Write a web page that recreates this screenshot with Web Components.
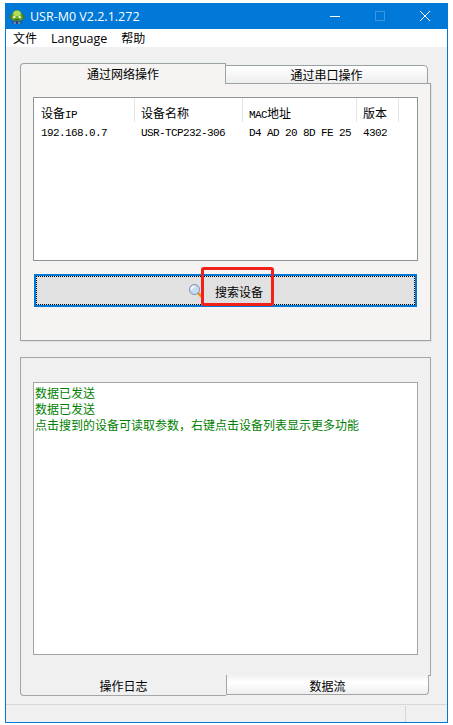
<!DOCTYPE html>
<html lang="zh">
<head>
<meta charset="utf-8">
<title>USR-M0</title>
<style>
  html, body { margin: 0; background: #fff; }
  body { font: 12px "Noto Sans CJK SC", sans-serif; color: #000; }
  .stack { display: block; }
</style>
</head>
<body>
<usr-window>
  <usr-titlebar slot="top">USR-M0 V2.2.1.272</usr-titlebar>
  <usr-menubar slot="top"></usr-menubar>

  <usr-tabs first="通过网络操作" second="通过串口操作">
    <div class="stack">
      <usr-listview></usr-listview>
      <usr-button>搜索设备</usr-button>
    </div>
  </usr-tabs>

  <usr-tabs bottom first="操作日志" second="数据流">
    <usr-log></usr-log>
  </usr-tabs>

  <usr-statusbar slot="bottom"></usr-statusbar>
</usr-window>

<script>
(function() {
  // titlebar with app icon and caption buttons
  class UsrTitlebar extends HTMLElement {
    constructor() {
      super();
      this.attachShadow({ mode: 'open' });
      this.shadowRoot.innerHTML = `
        <style>
          :host { display: flex; align-items: center; height: 26px; background: #0078d7; color: #fff;
            font: 12.5px "Open Sans", sans-serif; padding-left: 1px; }
          .logo { width: 20px; height: 20px; margin-right: 3px; flex: none; }
          .cap { flex: 1; padding-top: 1px; }
          .btns { display: flex; height: 26px; }
          .btn { width: 45px; display: flex; align-items: center; justify-content: center; }
          .btn svg { width: 12px; height: 12px; display: block; }
        </style>
        <svg class="logo" viewBox="0 0 20 20">
          <path d="M5.500 14.500h9V18h-9z" fill="#24477a"/>
          <path d="M6.500 15.500h2.500V18H6.500zM11 15.500h2.500V18H11z" fill="#5f86b8"/>
          <path d="M2.500 9.500l3-1.500v6l-3-1.500zM17.500 9.500l-3-1.500v6l3-1.500z" fill="#3f7a1c"/>
          <path d="M4.500 12c0-4.500 2.200-8 5.500-8s5.500 3.500 5.500 8c0 2-2.500 3-5.500 3s-5.500-1-5.500-3z" fill="#6aa626"/>
          <ellipse cx="10" cy="7.500" rx="3.600" ry="2.800" fill="#b5de58"/>
          <ellipse cx="7.300" cy="11" rx="1.300" ry="1.200" fill="#e6edd0"/>
          <ellipse cx="12.700" cy="11" rx="1.300" ry="1.200" fill="#e6edd0"/>
          <path d="M7.500 13.200h5v1.200h-5z" fill="#2f5a1a"/>
        </svg>
        <span class="cap"><slot></slot></span>
        <div class="btns">
          <div class="btn"><svg viewBox="0 0 12 12"><path d="M1 6.500h10" stroke="#fff" fill="none"/></svg></div>
          <div class="btn"><svg viewBox="0 0 12 12"><path d="M1.500 1.500h9v9h-9z" stroke="#3f97e0" fill="none"/></svg></div>
          <div class="btn"><svg viewBox="0 0 12 12"><path d="M1 1l10 10M11 1L1 11" stroke="#fff" fill="none"/></svg></div>
        </div>`;
    }
  }

  class UsrMenubar extends HTMLElement {
    constructor() {
      super();
      this.attachShadow({ mode: 'open' });
      this.shadowRoot.innerHTML = `
        <style>
          :host { display: flex; height: 18px; background: #fff;
            font: 12.500px "Open Sans", "Noto Sans CJK SC", sans-serif; padding-left: 7px; gap: 14px; }
          span { line-height: 20px; }
          .cn { font-size: 12px; }
        </style>
        <span class="cn">文件</span><span>Language</span><span class="cn">帮助</span>`;
    }
  }

  // panel with two tabs, on top or under it
  class UsrTabs extends HTMLElement {
    constructor() {
      super();
      this.attachShadow({ mode: 'open' });
      const first = this.getAttribute('first');
      const second = this.getAttribute('second');
      this.shadowRoot.innerHTML = `
        <style>
          :host { display: flex; flex-direction: column; width: 411px; height: 277px; flex: none; }
          :host([bottom]) { flex-direction: column-reverse; flex: 1; height: auto; min-height: 0; }
          .row { display: flex; align-items: flex-end; height: 20px; position: relative; z-index: 1; margin-bottom: -1px; }
          :host([bottom]) .row { align-items: flex-start; margin: -1px 0 0; height: 21px; }
          .tab { box-sizing: border-box; text-align: center; line-height: 20px; border: 1px solid #9aa3a3; }
          .a { width: 206px; height: 21px; background: #f5f4f2; border-bottom: 0; border-radius: 4px 0 0 0; }
          .b { width: 203px; height: 19px; margin-left: -1px; border-radius: 0 4px 0 0;
            background: linear-gradient(#fff, #eee); line-height: 17px; }
          :host([bottom]) .a { background: #f0f0f0; border: 1px solid #a5a5a5; border-top: 0;
            border-right: 0; height: 21px; border-radius: 0 0 0 4px; line-height: 21px; }
          :host([bottom]) .b { border: 1px solid #a5a5a5; border-top: 0; height: 20px;
            border-radius: 0 0 4px 0; margin-left: 0; line-height: 21px; background: linear-gradient(#f0f0f0, #fff 40%, #eee); }
          .body { flex: 1; display: flex; box-sizing: border-box; border: 1px solid #9aa3a3; background: #f5f4f2;
            box-shadow: 1px 1px 0 #e4e4e4; padding: 13px 12px 0; min-height: 0; }
          :host([bottom]) .body { background: #f0f0f0; border-color: #a5a5a5; box-shadow: none; padding: 24px 12px 20px; }
          ::slotted(*) { flex: 1; min-width: 0; }
        </style>
        <div class="row"><div class="tab a">${first}</div><div class="tab b">${second}</div></div>
        <div class="body"><slot></slot></div>`;
    }
  }

  class UsrListview extends HTMLElement {
    constructor() {
      super();
      this.attachShadow({ mode: 'open' });
      const cols = [
        [101, 7, '设备', 'IP', '192.168.0.7'],
        [108, 6, '设备名称', '', 'USR-TCP232-306'],
        [114, 6, '', 'MAC', 'D4 AD 20 8D FE 25', '地址'],
        [42, 6, '版本', '', '4302']
      ];
      const head = cols.map(c => `<div class="h" style="width:${c[0]}px;padding-left:${c[1]}px"><span>${c[2]}<b>${c[3]}</b>${c[5] || ''}</span></div>`).join('');
      const row = cols.map(c => `<div class="c" style="width:${c[0]}px;padding-left:${c[1]}px"><b>${c[4]}</b></div>`).join('');
      this.shadowRoot.innerHTML = `
        <style>
          :host { display: block; box-sizing: border-box; height: 164px; background: #fff; border: 1px solid #8e9494; }
          .line { display: flex; }
          .h { box-sizing: border-box; height: 24px; line-height: 29px; border-right: 1px solid #e5e5e5; white-space: nowrap; }
          .c { box-sizing: border-box; height: 16px; line-height: 18px; white-space: nowrap; }
          b { font: 11px "Liberation Mono", monospace; letter-spacing: -0.6px; }
        </style>
        <div class="line">${head}</div>
        <div class="line">${row}</div>`;
    }
  }

  class UsrButton extends HTMLElement {
    constructor() {
      super();
      this.attachShadow({ mode: 'open' });
      this.shadowRoot.innerHTML = `
        <style>
          :host { display: block; position: relative; box-sizing: border-box; height: 33px; width: 383px;
            margin: 13px 0 0 1px; background: #e1e1e1; border: 2px solid #0078d7; }
          .in { box-sizing: border-box; height: 100%; border: 1px dotted #000; display: flex;
            align-items: center; justify-content: center; gap: 11px; }
          .in span { padding-top: 2px; }
          svg { width: 16px; height: 16px; flex: none; margin-top: 0; }
          .mark { position: absolute; left: 165px; top: -9px; width: 73px; height: 39px; box-sizing: border-box;
            border: 3px solid #f2201a; border-radius: 3px; }
        </style>
        <div class="in">
          <svg viewBox="0 0 16 16">
            <path d="M10.500 10.500l3.500 3.500" stroke="#e8961e" stroke-width="2.500" stroke-linecap="round"/>
            <circle cx="6.500" cy="6.500" r="5" fill="#c6dcf0" stroke="#7f8fb8"/>
            <path d="M3.500 6.500a3 3 0 0 1 3-3" stroke="#fff" fill="none" stroke-width="1.500"/>
          </svg>
          <span><slot></slot></span>
        </div>
        <div class="mark"></div>`;
    }
  }

  class UsrLog extends HTMLElement {
    constructor() {
      super();
      this.attachShadow({ mode: 'open' });
      this.shadowRoot.innerHTML = `
        <style>
          :host { display: block; box-sizing: border-box; background: #fff; border: 1px solid #a5a5a5;
            color: #008000; padding: 2px 1px; line-height: 16px; }
          div { height: 16px; white-space: nowrap; }
        </style>
        <div>数据已发送</div>
        <div>数据已发送</div>
        <div>点击搜到的设备可读取参数，右键点击设备列表显示更多功能</div>`;
    }
  }

  class UsrStatusbar extends HTMLElement {
    constructor() {
      super();
      this.attachShadow({ mode: 'open' });
      this.shadowRoot.innerHTML = `
        <style>
          :host { display: flex; justify-content: flex-end; box-sizing: border-box; height: 18px;
            background: #f0f0f0; border-top: 1px solid #d7d7d7; padding-top: 1px; }
          div { width: 41px; border-left: 1px solid #d7d7d7; }
        </style>
        <div></div>`;
    }
  }

  class UsrWindow extends HTMLElement {
    constructor() {
      super();
      this.attachShadow({ mode: 'open' });
      this.shadowRoot.innerHTML = `
        <style>
          :host { display: flex; flex-direction: column; box-sizing: border-box; width: 443px; height: 720px;
            margin: 3px 0 0 5px; border: 1px solid #0078d7; border-top: 0; }
          .content { flex: 1; min-height: 0; display: flex; flex-direction: column; gap: 16px;
            background: #f0f0f0; padding: 17px 0 8px 14px; }
        </style>
        <slot name="top"></slot>
        <div class="content"><slot></slot></div>
        <slot name="bottom"></slot>`;
    }
  }

  customElements.define('usr-titlebar', UsrTitlebar);
  customElements.define('usr-menubar', UsrMenubar);
  customElements.define('usr-tabs', UsrTabs);
  customElements.define('usr-listview', UsrListview);
  customElements.define('usr-button', UsrButton);
  customElements.define('usr-log', UsrLog);
  customElements.define('usr-statusbar', UsrStatusbar);
  customElements.define('usr-window', UsrWindow);
})();
</script>
</body>
</html>
